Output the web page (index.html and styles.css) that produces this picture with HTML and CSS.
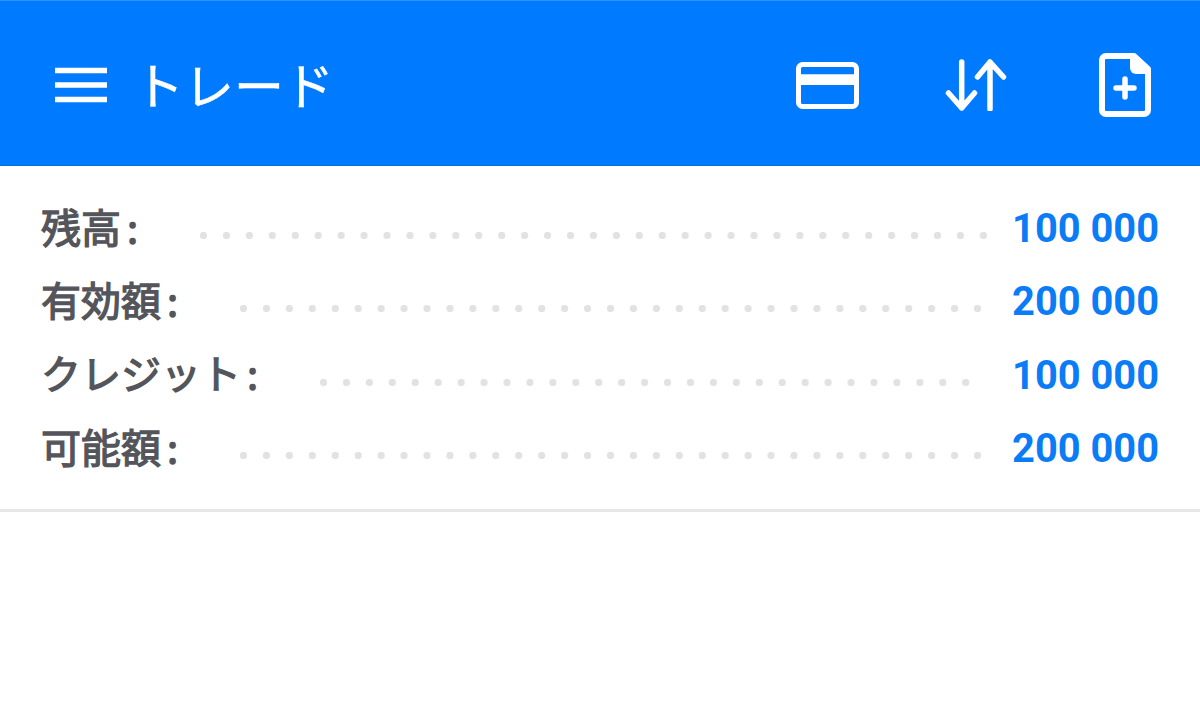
FILE: index.html
```html
<!DOCTYPE html>
<html lang="ja">
<head>
    <meta charset="UTF-8">
    <meta name="viewport" content="width=device-width, initial-scale=1.0">
    <title>トレード</title>
    <link rel="stylesheet" href="styles.css">
</head>
<body>
    <header class="topbar">
        <svg class="menu-icon" viewBox="0 0 52 36" width="52" height="36" aria-hidden="true">
            <path d="M0 3.5h52M0 18h52M0 32.5h52" fill="none" stroke="#fff" stroke-width="5.5"/>
        </svg>
        <h1 class="title">トレード</h1>
        <div class="actions">
            <svg class="icon-card" viewBox="0 0 64 47" width="64" height="47" aria-hidden="true">
                <rect x="2.5" y="2.5" width="58" height="42" rx="4" fill="none" stroke="#fff" stroke-width="5"/>
                <path d="M3 17.6h58" fill="none" stroke="#fff" stroke-width="10.7"/>
            </svg>
            <svg class="icon-swap" viewBox="0 0 64 52" width="64" height="52" aria-hidden="true">
                <path d="M17.7 3V49M4.5 34L17.7 49L30.5 34M46 50V3M33.5 18L46 3L59.5 18" fill="none" stroke="#fff" stroke-width="5.5" stroke-linecap="round" stroke-linejoin="round"/>
            </svg>
            <svg class="icon-doc" viewBox="0 0 52 64" width="52" height="64" aria-hidden="true">
                <path d="M7 3h28l14 13v41a4 4 0 0 1-4 4H7a4 4 0 0 1-4-4V7a4 4 0 0 1 4-4z" fill="none" stroke="#fff" stroke-width="6" stroke-linejoin="round"/>
                <path d="M31 3l20 18H37a6 6 0 0 1-6-6z" fill="#fff"/>
                <path d="M26 26v18M17 35h18" fill="none" stroke="#fff" stroke-width="5.5" stroke-linecap="round"/>
            </svg>
        </div>
    </header>
    <section class="summary">
        <div class="row"><span class="label">残高 :</span><span class="dots"></span><span class="value">100 000</span></div>
        <div class="row"><span class="label">有効額 :</span><span class="dots"></span><span class="value">200 000</span></div>
        <div class="row"><span class="label">クレジット :</span><span class="dots dots-short"></span><span class="value">100 000</span></div>
        <div class="row"><span class="label">可能額 :</span><span class="dots"></span><span class="value">200 000</span></div>
    </section>
</body>
</html>
```

FILE: styles.css
```css
body {
    margin: 0;
    background: #fff;
    font-family: "Noto Sans CJK JP", "Noto Sans", sans-serif;
}
.topbar {
    display: flex;
    align-items: center;
    box-sizing: border-box;
    height: 166px;
    padding: 4px 49px 0 55px;
    background: #007bff;
    border-top: 1px solid #2f93ff;
    border-bottom: 1px solid #0a6fdc;
    color: #fff;
}
.title {
    margin: 0 0 4px 27px;
    font-size: 50px;
    font-weight: 400;
    line-height: 1;
    -webkit-text-stroke: 0.5px #fff;
}
.actions {
    display: flex;
    align-items: center;
    margin-left: auto;
}
.icon-swap {
    margin: 0 91px 0 84px;
}
.summary {
    padding: 26px 41px 24px 41px;
    border-bottom: 3px solid #e6e7e8;
}
.row {
    display: flex;
    align-items: center;
    height: 73.3px;
}
.label {
    margin-bottom: 6px;
    font-size: 40px;
    font-weight: 400;
    word-spacing: -3px;
    color: #53555b;
    -webkit-text-stroke: 1.3px #53555b;
}
.dots {
    flex: 1;
    height: 7px;
    margin: 14px 25px 0 61.5px;
    background: radial-gradient(circle at 3.5px 3.5px, #e2e2e2 3.4px, transparent 4px) left top / 22.95px 7px repeat-x;
}
.dots-short {
    margin-right: 40px;
}
.value {
    font-family: Roboto, sans-serif;
    font-size: 39.8px;
    font-weight: 700;
    color: #0a7cf5;
}
```
